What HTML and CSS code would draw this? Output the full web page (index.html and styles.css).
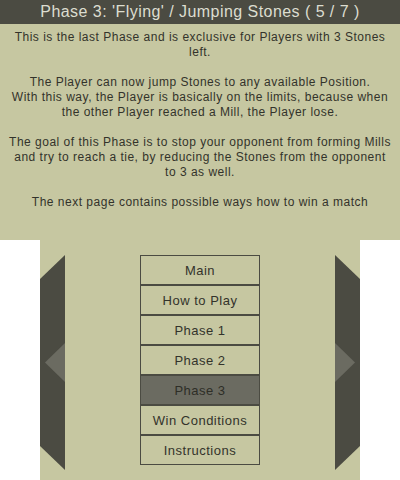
FILE: index.html
```html
<!DOCTYPE html>
<html>
<head>
<meta charset="utf-8">
<link rel="stylesheet" href="styles.css">
</head>
<body>
<div class="top">
  <div class="title">Phase 3: 'Flying' / Jumping Stones ( 5 / 7 )</div>
  <div class="text">
    <p>This is the last Phase and is exclusive for Players with 3 Stones left.</p>
    <p>The Player can now jump Stones to any available Position.<br>With this way, the Player is basically on the limits, because when the other Player reached a Mill, the Player lose.</p>
    <p>The goal of this Phase is to stop your opponent from forming Mills and try to reach a tie, by reducing the Stones from the opponent to 3 as well.</p>
    <p>The next page contains possible ways how to win a match</p>
  </div>
</div>
<div class="bottom">
  <div class="panel">
    <svg class="arrow" width="25" height="215" viewBox="0 0 25 215">
      <polygon points="0,24 25,0 25,215 0,191" fill="#4b4b42"/>
      <polygon points="5,107.5 25,88 25,127" fill="#6b6b61"/>
    </svg>
    <div class="menu">
      <div class="btn">Main</div>
      <div class="btn">How to Play</div>
      <div class="btn">Phase 1</div>
      <div class="btn">Phase 2</div>
      <div class="btn active">Phase 3</div>
      <div class="btn">Win Conditions</div>
      <div class="btn">Instructions</div>
    </div>
    <svg class="arrow" width="25" height="215" viewBox="0 0 25 215">
      <polygon points="0,0 25,24 25,191 0,215" fill="#4b4b42"/>
      <polygon points="20,107.5 0,88 0,127" fill="#6b6b61"/>
    </svg>
  </div>
</div>
</body>
</html>
```
FILE: styles.css
```css
html, body {
  margin: 0;
  padding: 0;
  background: #ffffff;
}
body {
  width: 400px;
  height: 480px;
  overflow: hidden;
  font-family: "Liberation Sans", Arial, sans-serif;
  color: #33332b;
}
.top {
  height: 240px;
  background: #c6c7a1;
  display: flex;
  flex-direction: column;
}
.title {
  height: 24px;
  line-height: 24px;
  background: #4b4b42;
  color: #dcddd0;
  font-size: 16px;
  letter-spacing: 0.45px;
  text-align: center;
}
.text {
  padding: 6px 8px 0;
  font-size: 12px;
  line-height: 15px;
  letter-spacing: 0.5px;
  text-align: center;
}
.text p {
  margin: 0 0 15px;
}
.bottom {
  height: 240px;
  display: flex;
  justify-content: center;
}
.panel {
  width: 320px;
  height: 240px;
  background: #c6c7a1;
  display: flex;
  justify-content: space-between;
  align-items: flex-start;
  padding-top: 15px;
  box-sizing: border-box;
}
.arrow {
  display: block;
}
.menu {
  width: 120px;
  display: flex;
  flex-direction: column;
}
.btn {
  height: 30px;
  box-sizing: border-box;
  border: 1px solid #4b4b42;
  display: flex;
  align-items: center;
  justify-content: center;
  font-size: 13px;
  letter-spacing: 0.5px;
  color: #33332b;
}
.btn.active {
  background: #6b6b61;
  color: #2e2e27;
}
```
